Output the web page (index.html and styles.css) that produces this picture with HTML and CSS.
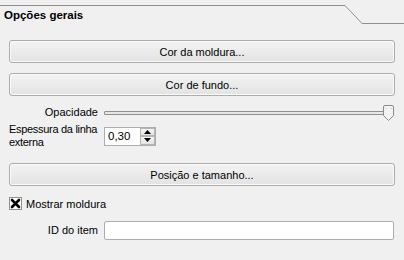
FILE: index.html
```html
<!DOCTYPE html>
<html lang="pt">

<head>
    <title>Opções gerais</title>
    <link rel="stylesheet" href="styles.css">
</head>

<body>
    <!-- Tab header -->
    <div class="tab-header">
        <div class="tab-title">Opções gerais</div>
        <svg class="tab-slope" width="17" height="19" viewBox="0 0 17 19">
            <path d="M0 0.5 L17 18.5" stroke="#8f8f8f" stroke-width="1" fill="none" />
        </svg>
        <div class="tab-rest"></div>
    </div>

    <div class="panel">
        <button class="btn btn-first">Cor da moldura...</button>
        <button class="btn btn-second">Cor de fundo...</button>

        <!-- Opacity -->
        <div class="form-row row-opacity">
            <span class="label">Opacidade</span>
            <div class="slider">
                <div class="groove"></div>
                <svg class="handle" width="11" height="16" viewBox="0 0 11 16">
                    <path d="M2 0.5 H9 Q10.5 0.5 10.5 2 V10.5 L5.5 15.5 L0.5 10.5 V2 Q0.5 0.5 2 0.5 Z"
                        fill="#f4f4f4" stroke="#8a8a8a" />
                    <path d="M3 3 V4 M8 3 V4" stroke="#b8b8b8" />
                </svg>
            </div>
        </div>

        <!-- Line width -->
        <div class="form-row row-width">
            <span class="label label-left">Espessura da linha<br>externa</span>
            <div class="spinbox">
                <span class="spin-value">0,30</span>
                <div class="spin-buttons">
                    <div class="spin-up">
                        <svg width="7" height="4" viewBox="0 0 7 4"><path d="M3.5 0 L7 4 H0 Z" fill="#000" /></svg>
                    </div>
                    <div class="spin-down">
                        <svg width="7" height="4" viewBox="0 0 7 4"><path d="M0 0 H7 L3.5 4 Z" fill="#000" /></svg>
                    </div>
                </div>
            </div>
        </div>

        <button class="btn btn-third">Posição e tamanho...</button>

        <!-- Show frame -->
        <div class="check-row">
            <span class="checkbox">
                <svg width="11" height="11" viewBox="0 0 11 11">
                    <path d="M2 2 L9 9 M9 2 L2 9" stroke="#000" stroke-width="2.6" stroke-linecap="round" />
                </svg>
            </span>
            <span>Mostrar moldura</span>
        </div>

        <!-- Item ID -->
        <div class="form-row row-id">
            <span class="label">ID do item</span>
            <div class="text-input"></div>
        </div>
    </div>
</body>

</html>
```

FILE: styles.css
```css
* {
    margin: 0;
    padding: 0;
    box-sizing: border-box;
}

body {
    width: 404px;
    height: 260px;
    background-color: #f0f0f0;
    font-family: 'Liberation Sans', Arial, sans-serif;
    font-size: 11px;
    color: #000;
    overflow: hidden;
}

/* Tab header */
.tab-header {
    display: flex;
    height: 24px;
    padding-top: 5px;
}

.tab-title {
    flex: 1;
    border-top: 1px solid #8f8f8f;
    padding: 3px 0 0 4px;
    font-weight: bold;
    font-size: 11.5px;
}

.tab-slope {
    display: block;
    flex: none;
}

.tab-rest {
    width: 42px;
    border-bottom: 1px solid #8f8f8f;
}

/* Panel content */
.panel {
    padding: 0 9px;
}

.btn {
    display: block;
    width: 100%;
    height: 23px;
    font-family: inherit;
    font-size: 11px;
    color: #000;
    border: 1px solid #acacac;
    border-radius: 3px;
    background: linear-gradient(to bottom, #f3f3f3, #e3e3e3);
    box-shadow: inset 0 0 0 1px #fbfbfb;
}

.btn-first {
    margin-top: 16px;
}

.btn-second {
    margin-top: 10px;
}

.btn-third {
    margin-top: 14px;
}

.form-row {
    display: flex;
    align-items: center;
    gap: 6px;
}

.label {
    width: 89px;
    flex: none;
    text-align: right;
    white-space: nowrap;
    line-height: 13px;
}

.label-left {
    text-align: left;
    letter-spacing: -0.3px;
}

/* Opacity slider */
.row-opacity {
    margin-top: 8px;
    height: 17px;
}

.slider {
    flex: 1;
    display: flex;
    align-items: center;
    height: 16px;
    padding-right: 1px;
}

.groove {
    flex: 1;
    height: 4px;
    border: 1px solid #8f8f8f;
    border-radius: 1px;
    background-color: #e7e7e7;
    margin-right: -5px;
}

.handle {
    display: block;
    flex: none;
}

/* Spinbox */
.row-width {
    margin-top: 2px;
    height: 26px;
}

.spinbox {
    display: flex;
    width: 52px;
    height: 19px;
    border: 1px solid #abadb3;
    background-color: #fff;
}

.spin-value {
    flex: 1;
    padding: 2px 0 0 3px;
    font-size: 11.5px;
}

.spin-buttons {
    width: 15px;
    display: flex;
    flex-direction: column;
}

.spin-up,
.spin-down {
    flex: 1;
    display: flex;
    align-items: center;
    justify-content: center;
    border: 1px solid #b5b5b5;
    background: linear-gradient(to bottom, #f6f6f6, #e2e2e2);
}

.spin-up svg,
.spin-down svg {
    display: block;
}

/* Checkbox */
.check-row {
    display: flex;
    align-items: center;
    gap: 4px;
    margin-top: 11px;
    height: 13px;
}

.checkbox {
    display: flex;
    align-items: center;
    justify-content: center;
    width: 13px;
    height: 13px;
    border: 1px solid #8e8f8f;
    background-color: #fff;
}

.checkbox svg {
    display: block;
}

/* Item ID */
.row-id {
    margin-top: 11px;
}

.text-input {
    flex: 1;
    height: 19px;
    border: 1px solid #abadb3;
    border-radius: 2px;
    background-color: #fff;
    margin-right: 1px;
}
```
